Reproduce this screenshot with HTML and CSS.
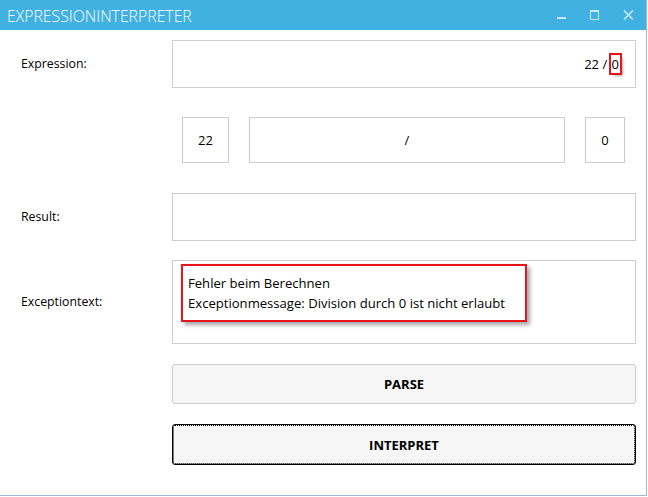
FILE: index.html
```html
<!DOCTYPE html>
<html>
<head>
<meta charset="utf-8">
<link rel="stylesheet" href="styles.css">
</head>
<body>
<div class="window">
  <div class="titlebar">
    <span class="title">EXPRESSIONINTERPRETER</span>
    <div class="controls">
      <svg class="ctl" width="10" height="10" viewBox="0 0 10 10"><rect x="0" y="7" width="9" height="2" fill="#c9e8f7"/></svg>
      <svg class="ctl" width="10" height="10" viewBox="0 0 10 10"><rect x="0.5" y="0.5" width="8" height="9" fill="none" stroke="#c9e8f7" stroke-width="1"/><rect x="0" y="0" width="9" height="2" fill="#c9e8f7"/></svg>
      <svg class="ctl" width="11" height="10" viewBox="0 0 11 10"><path d="M1 0.5 L10 9.5 M10 0.5 L1 9.5" stroke="#c9e8f7" stroke-width="1.6"/></svg>
    </div>
  </div>
  <div class="content">
    <div class="row row-expr">
      <label class="label">Expression:</label>
      <div class="box box-expr"><span class="expr">22 / <span class="mark">0</span></span></div>
    </div>
    <div class="row row-tokens">
      <div class="tokens">
        <div class="box tok tok-a">22</div>
        <div class="box tok tok-op">/</div>
        <div class="box tok tok-b">0</div>
      </div>
    </div>
    <div class="row row-result">
      <label class="label">Result:</label>
      <div class="box box-result"></div>
    </div>
    <div class="row row-exc">
      <label class="label">Exceptiontext:</label>
      <div class="box box-exc">
        <div class="exc-mark">
          <div>Fehler beim Berechnen</div>
          <div>Exceptionmessage: Division durch 0 ist nicht erlaubt</div>
        </div>
      </div>
    </div>
    <div class="row row-btn">
      <div class="btn">PARSE</div>
    </div>
    <div class="row row-btn2">
      <div class="btn btn-focus">INTERPRET</div>
    </div>
  </div>
</div>
</body>
</html>
```

FILE: styles.css
```css
html, body {
  margin: 0;
  padding: 0;
  background: #ffffff;
}
body {
  width: 648px;
  height: 497px;
  font-family: "Open Sans", "Noto Sans", sans-serif;
  font-size: 12.3px;
  color: #000;
}
.window {
  width: 646px;
  height: 495px;
  border-right: 1px solid #9bbbd9;
  border-bottom: 1px solid #9bbbd9;
  display: flex;
  flex-direction: column;
}
.titlebar {
  height: 30px;
  background: #41b1e1;
  display: flex;
  align-items: center;
  justify-content: space-between;
  flex: none;
}
.title {
  color: #ffffff;
  font-weight: 300;
  font-size: 15.8px;
  margin-left: 7px;
  margin-top: 1px;
}
.controls {
  display: flex;
  align-items: center;
  margin-right: 12px;
  gap: 23px;
}
.ctl { display: block; }
.content {
  display: flex;
  flex-direction: column;
  padding: 0 10px 0 0;
}
.row {
  display: grid;
  grid-template-columns: 172px 464px;
  align-items: center;
}
.label {
  padding-left: 21px;
  line-height: 16px;
}
.box {
  border: 1px solid #cccccc;
  box-sizing: border-box;
  background: #fff;
}
.row-expr { margin-top: 10px; }
.box-expr {
  height: 48px;
  display: flex;
  align-items: center;
  justify-content: flex-end;
  padding-right: 15px;
  font-size: 13px;
}
.expr { position: relative; }
.mark {
  display: inline-block;
  outline: 2px solid #e8141b;
  outline-offset: 0px;
  padding: 0 1px;
  box-shadow: 3px 3px 3px rgba(0,0,0,0.35);
}
.row-tokens { margin-top: 29px; }
.tokens {
  grid-column: 2;
  display: flex;
  gap: 20px;
  padding-left: 10px;
  padding-right: 11px;
}
.tok {
  height: 46px;
  display: flex;
  align-items: center;
  justify-content: center;
  font-size: 13px;
}
.tok-a { width: 47px; }
.tok-op { width: 317px; }
.tok-b { width: 40px; }
.row-result { margin-top: 30px; }
.box-result { height: 48px; }
.row-exc { margin-top: 19px; }
.box-exc {
  height: 84px;
  padding: 3px 0 0 8px;
  font-size: 13.1px;
  line-height: 19.5px;
}
.exc-mark {
  display: inline-block;
  border: 2px solid #e8141b;
  padding: 8px 20px 7px 5px;
  box-shadow: 3px 3px 4px rgba(0,0,0,0.35);
}
.row-btn { margin-top: 20px; }
.row-btn2 { margin-top: 20px; }
.btn {
  grid-column: 2;
  height: 40px;
  box-sizing: border-box;
  border: 1px solid #cccccc;
  border-radius: 3px;
  background: #f6f6f6;
  display: flex;
  align-items: center;
  justify-content: center;
  font-weight: 700;
  font-size: 13px;
}
.btn-focus {
  height: 41px;
  border: 1px solid #000;
  outline: 1px dotted #000;
  outline-offset: -2px;
}
```
